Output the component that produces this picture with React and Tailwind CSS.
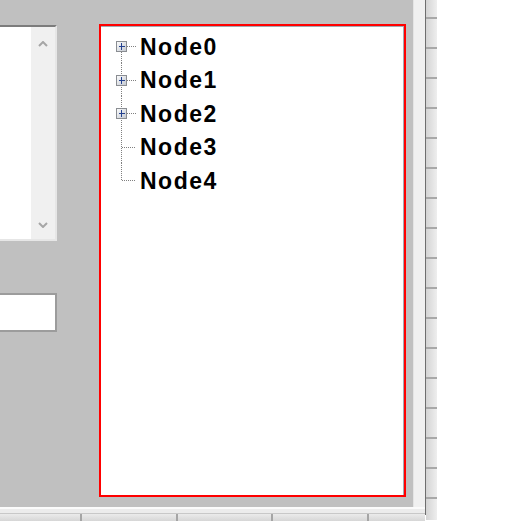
import React from 'react';

const nodes = [
  { label: 'Node0', kids: true },
  { label: 'Node1', kids: true },
  { label: 'Node2', kids: true },
  { label: 'Node3', kids: false },
  { label: 'Node4', kids: false },
];

// tree connector + expand box, one per row
function Branch({ kids, first, last }) {
  const cy = 16.5;
  return (
    <svg width="40" height="33.5" viewBox="0 0 40 33.5" className="shrink-0">
      <defs>
        <linearGradient id="boxg" x1="0" y1="0" x2="1" y2="1">
          <stop offset="0" stopColor="#ffffff" />
          <stop offset="1" stopColor="#c3c8d0" />
        </linearGradient>
      </defs>
      <line
        x1="20.5"
        y1={first ? cy + 6 : 0}
        x2="20.5"
        y2={last ? cy : 33.5}
        stroke="#808080"
        strokeDasharray="1 1"
        shapeRendering="crispEdges"
      />
      <line
        x1={kids ? 26 : 21}
        y1={cy + 0.5}
        x2="35"
        y2={cy + 0.5}
        stroke="#808080"
        strokeDasharray="1 1"
        shapeRendering="crispEdges"
      />
      {kids && (
        <g shapeRendering="crispEdges">
          <rect x="15.5" y={cy - 4.5} width="10" height="10" fill="url(#boxg)" stroke="#8a8d92" />
          <line x1="17.5" y1={cy + 0.5} x2="24" y2={cy + 0.5} stroke="#23418f" />
          <line x1="20.5" y1={cy - 2.5} x2="20.5" y2={cy + 4} stroke="#23418f" />
        </g>
      )}
    </svg>
  );
}

function Chevron({ up }) {
  return (
    <svg width="10" height="6" viewBox="0 0 10 6">
      <path
        d={up ? 'M1 5 L5 1 L9 5' : 'M1 1 L5 5 L9 1'}
        fill="none"
        stroke="#a6a6a6"
        strokeWidth="2"
      />
    </svg>
  );
}

export default function App() {
  return (
    <div className="w-[505px] h-[521px] bg-white flex overflow-hidden" style={{ fontFamily: '"Liberation Sans", Arial, sans-serif' }}>
      {/* form surface + frame edges */}
      <div className="w-[425px] flex flex-col shrink-0">
        <div className="h-[507px] flex">
          <div className="w-[413px] bg-[#c0c0c0] flex items-start">
            {/* clipped controls on the left */}
            <div className="w-[57px] flex flex-col">
              <div className="mt-[25px] h-[216px] flex border-t-2 border-t-[#7c7c7c] border-r-2 border-b-2 border-r-[#e6e6e6] border-b-[#e6e6e6] bg-white">
                <div className="flex-1" />
                <div className="w-[24px] bg-[#f0f0f0] flex flex-col items-center justify-between pt-[14px] pb-[11px]">
                  <Chevron up />
                  <Chevron />
                </div>
              </div>
              <div className="mt-[52px] h-[39px] bg-white border-2 border-l-0 border-[#9c9c9c]" />
            </div>

            {/* tree view */}
            <div className="ml-[42px] mt-[24px] w-[307px] h-[473px] border-2 border-[#ff0000] bg-white">
              <div className="h-full border-t border-r border-[#a3aab4] pt-[2px]">
                {nodes.map((n, i) => (
                  <div key={n.label} className="h-[33.5px] flex items-center">
                    <Branch kids={n.kids} first={i === 0} last={i === nodes.length - 1} />
                    <span className="-ml-[1px] mt-[3px] text-[23px] font-bold tracking-[1.5px] text-black leading-none">
                      {n.label}
                    </span>
                  </div>
                ))}
              </div>
            </div>
          </div>
          <div className="w-[12px] bg-[#f0f0f0] border-l border-[#e4e4e4]" />
        </div>
        <div className="h-[2px] bg-[#fbfbfb]" />
        <div className="h-[5px] bg-[#ececec] border-b border-[#c8c8c8]" />
        <div className="h-[7px] flex bg-gradient-to-b from-[#ebebeb] to-[#d6d6d6]">
          <div className="w-[82px] border-r-2 border-[#a5a5a5]" />
          <div className="w-[96px] border-r-2 border-[#a5a5a5]" />
          <div className="w-[95px] border-r-2 border-[#a5a5a5]" />
          <div className="w-[96px] border-r-2 border-[#a5a5a5]" />
          <div className="flex-1" />
        </div>
      </div>

      {/* dark frame line and header cells */}
      <div className="w-[1px] h-[515px] bg-[#6e6e6e] shrink-0" />
      <div className="w-[11px] h-[520px] shrink-0 flex flex-col bg-gradient-to-r from-[#d4d4d4] to-[#eeeeee]">
        <div className="h-[19px] border-b-2 border-[#a8a8a8]" />
        {Array.from({ length: 16 }).map((_, i) => (
          <div key={i} className="h-[30px] shrink-0 border-b-2 border-[#a8a8a8]" />
        ))}
      </div>
      <div className="flex-1" />
    </div>
  );
}
